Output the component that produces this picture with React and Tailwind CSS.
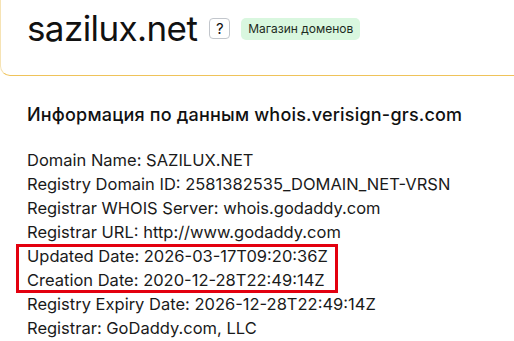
import React from "react"

const lines = [
  "Domain Name: SAZILUX.NET",
  "Registry Domain ID: 2581382535_DOMAIN_NET-VRSN",
  "Registrar WHOIS Server: whois.godaddy.com",
  "Registrar URL: http://www.godaddy.com",
]

const highlighted = [
  "Updated Date: 2026-03-17T09:20:36Z",
  "Creation Date: 2020-12-28T22:49:14Z",
]

const rest = [
  "Registry Expiry Date: 2026-12-28T22:49:14Z",
  "Registrar: GoDaddy.com, LLC",
]

export default function App() {
  return (
    <div
      className="w-[514px] h-[341px] overflow-hidden bg-white text-[#111]"
      style={{ fontFamily: "Inter, 'Noto Sans', sans-serif" }}
    >
      {/* Header card */}
      <div className="h-[76px] border-b border-l border-b-[#efc35a] border-l-[#f6e3b4] rounded-bl-[10px] pl-[26px] flex items-start">
        <div className="flex items-center gap-[12px] h-[56px]">
          <h1 className="text-[35px] leading-none font-normal tracking-[-0.6px]">sazilux.net</h1>
          <div className="flex items-center gap-[11px] mt-[1px]">
            <span className="w-[21px] h-[21px] border border-[#c2c6cc] rounded-[4px] flex items-center justify-center text-[15px] leading-none">
              ?
            </span>
            <span className="h-[22px] px-[7px] rounded-[5px] bg-[#d9f7df] text-[12px] text-[#1d2b22] flex items-center">
              Магазин доменов
            </span>
          </div>
        </div>
      </div>

      {/* WHOIS info */}
      <div className="pt-[27px] px-[27px]">
        <h2 className="text-[18px] leading-[24px] font-medium tracking-[0.2px]">
          Информация по данным whois.verisign-grs.com
        </h2>
        <div className="mt-[21px] text-[16.5px] leading-[24px] text-[#1a1a1a] whitespace-nowrap">
          {lines.map((l) => (
            <div key={l}>{l}</div>
          ))}
          <div className="-mx-[11px] px-[8px] border-[3px] border-[#e3000f] w-[322px] h-[49px] -mb-[1px]">
            <div className="-mt-[3px]">
              {highlighted.map((l) => (
                <div key={l}>{l}</div>
              ))}
            </div>
          </div>
          {rest.map((l) => (
            <div key={l}>{l}</div>
          ))}
        </div>
      </div>
    </div>
  )
}
